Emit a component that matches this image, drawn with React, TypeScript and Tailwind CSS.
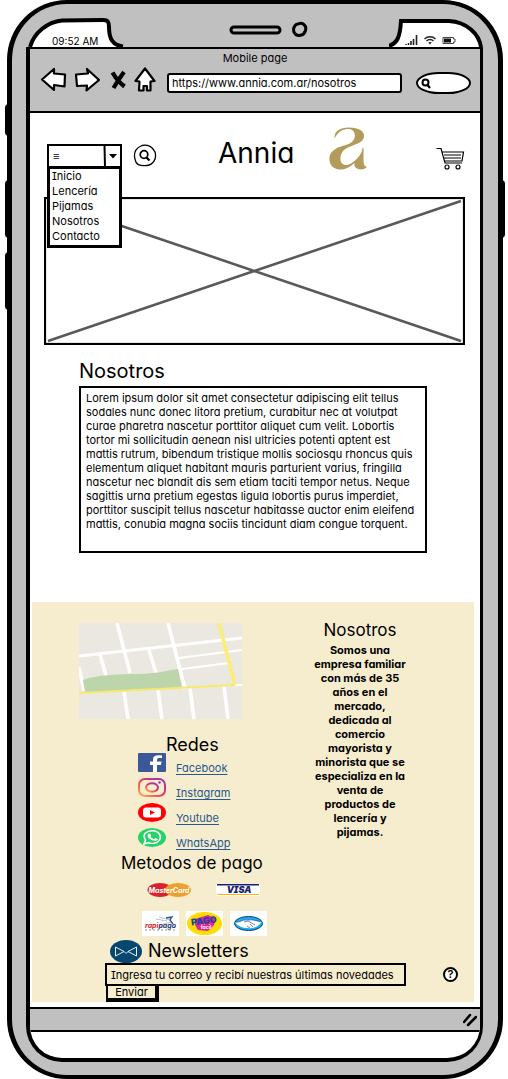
import React from "react";

const menu = ["Inicio", "Lencería", "Pijamas", "Nosotros", "Contacto"];

const about = [
  "Lorem ipsum dolor sit amet consectetur adipiscing elit tellus",
  "sodales nunc donec litora pretium, curabitur nec at volutpat",
  "curae pharetra nascetur porttitor aliquet cum velit. Lobortis",
  "tortor mi sollicitudin aenean nisl ultricies potenti aptent est",
  "mattis rutrum, bibendum tristique mollis sociosqu rhoncus quis",
  "elementum aliquet habitant mauris parturient varius, fringilla",
  "nascetur nec blandit dis sem etiam taciti tempor netus. Neque",
  "sagittis urna pretium egestas ligula lobortis purus imperdiet,",
  "porttitor suscipit tellus nascetur habitasse auctor enim eleifend",
  "mattis, conubia magna sociis tincidunt diam congue torquent.",
];

const company = [
  "Somos una",
  "empresa familiar",
  "con más de 35",
  "años en el",
  "mercado,",
  "dedicada al",
  "comercio",
  "mayorista y",
  "minorista que se",
  "especializa en la",
  "venta de",
  "productos de",
  "lencería y",
  "pijamas.",
];

function StatusBar() {
  return (
    <div className="flex h-[45px] items-stretch justify-between border-b-2 border-black">
      <div className="relative w-[98px]">
        <svg className="absolute inset-0" width="98" height="43" viewBox="0 0 98 43" aria-hidden="true">
          <path d="M4 43C7 31 19 17 36 16L78 15.500C83 15.500 84 18 84 23C84 34 87 41 98 43Z" fill="#fff" />
          <path d="M4 43C8 29 21 18 36 16.500L77 16C82 16 83 18 83 23C83 34 86 41 97 42.500" fill="none" stroke="#000" strokeWidth="4" />
        </svg>
        <span className="relative block pt-[30px] pl-[26px] text-[10px] leading-[14px]">09:52 AM</span>
      </div>
      <div className="flex items-start gap-[9px] pt-[17px] pl-6">
        <svg width="53" height="15" viewBox="0 0 53 15" aria-hidden="true">
          <rect x="2" y="6" width="49" height="6" rx="3" fill="#c0c0c0" stroke="#000" strokeWidth="3" />
        </svg>
        <svg width="17" height="17" viewBox="0 0 17 17" aria-hidden="true">
          <path d="M7 3C11 1 16 4 14.500 9.500C13 15 6 16 3.500 12C1 8 4 3 7 3Z" fill="#c0c0c0" stroke="#000" strokeWidth="3" />
        </svg>
      </div>
      <div className="relative w-[94px]">
        <svg className="absolute inset-0" width="94" height="43" viewBox="0 0 94 43" aria-hidden="true">
          <path d="M0 43C8 40 11 35 12 16.500H60C77 17 90 30 92 43Z" fill="#fff" />
          <path d="M0 42C8 39 11 34 12 17H60C78 18 90 30 92 43" fill="none" stroke="#000" strokeWidth="4" />
        </svg>
        <div className="relative flex items-end gap-[6px] pt-[30px] pl-4">
          <svg width="13" height="12" viewBox="0 0 13 12" aria-hidden="true">
            <path d="M1 11v-1M3.500 11V9M6 11V7M8.500 11V5M11.500 11V1" stroke="#222" strokeWidth="1.600" />
          </svg>
          <svg width="12" height="12" viewBox="0 0 12 12" fill="none" stroke="#222" strokeWidth="1.400" aria-hidden="true">
            <path d="M0.500 5C3.500 2 8.500 2 11.500 5M2.500 7C4.500 5 7.500 5 9.500 7" />
            <path d="M4.300 8.500C5.400 7.700 6.600 7.700 7.700 8.500L6 10.500Z" fill="#222" stroke="none" />
          </svg>
          <svg width="14" height="10" viewBox="0 0 14 10" aria-hidden="true">
            <path d="M1 1.500H11.500V3H13V6H11.500V7.500H1Z" fill="#fff" stroke="#444" />
            <rect x="2" y="2.500" width="7" height="4" fill="#111" />
          </svg>
        </div>
      </div>
    </div>
  );
}

function BrowserBar() {
  return (
    <header className="h-[64px] border-b-2 border-black bg-[#c0c0c0]">
      <p className="pt-[3px] text-center text-[11px] leading-[13px]">Mobile page</p>
      <div className="flex items-center pr-[9px] pl-[10px]">
        <div className="flex items-center gap-[7px]">
          <button type="button" aria-label="Atrás">
            <svg width="27" height="25" viewBox="0 0 27 25" aria-hidden="true">
              <path d="M2 12.500L14 2V6.500L25 7.500L24.500 19.500L14 18V23Z" fill="#fff" stroke="#000" strokeWidth="2.200" strokeLinejoin="round" />
            </svg>
          </button>
          <button type="button" aria-label="Adelante">
            <svg width="27" height="25" viewBox="0 0 27 25" aria-hidden="true">
              <path d="M25 13L13 2L14 6.500L2 7.500L3 19L13 18.500L12.500 23.500Z" fill="#fff" stroke="#000" strokeWidth="2.200" strokeLinejoin="round" />
            </svg>
          </button>
          <button type="button" aria-label="Detener" className="pl-[2px]">
            <svg width="17" height="20" viewBox="0 0 17 20" aria-hidden="true">
              <path d="M2.500 2.500C5 7 10 13 14.500 16.500M14 2C11 6 7 12 3.500 18" fill="none" stroke="#000" strokeWidth="4.200" />
            </svg>
          </button>
          <button type="button" aria-label="Página de inicio">
            <svg width="22" height="25" viewBox="0 0 22 25" aria-hidden="true">
              <path d="M11 1.500L20.500 14L16.500 14.500V23.500H13V19H9.500V23.500H5L5.500 14.500L1.500 14Z" fill="#fff" stroke="#000" strokeWidth="2.200" strokeLinejoin="round" />
            </svg>
          </button>
        </div>
        <input
          aria-label="Dirección"
          defaultValue="https://www.annia.com.ar/nosotros"
          className="mt-[7px] ml-[11px] h-5 min-w-0 flex-1 rounded-[3px] border-2 border-black bg-white px-[3px] text-[11px] leading-4"
        />
        <label className="mt-[7px] ml-[14px] flex h-[22px] w-[55px] shrink-0 items-center rounded-[50%/60%] border-2 border-black bg-white pl-[3px]">
          <svg className="shrink-0" width="10" height="11" viewBox="0 0 10 11" aria-hidden="true">
            <circle cx="4.500" cy="4.500" r="3" fill="none" stroke="#000" strokeWidth="2" />
            <path d="M6.500 7L9 10" stroke="#000" strokeWidth="2.200" />
          </svg>
          <input aria-label="Buscar en la web" className="w-full min-w-0 bg-transparent text-[11px] outline-none" />
        </label>
      </div>
    </header>
  );
}

function SiteHeader() {
  return (
    <div className="flex h-[84px] items-start pt-[14px] pr-[15px] pl-[17px]">
      <div className="relative mt-[17px] w-[75px] shrink-0">
        <select aria-label="Menú" className="block h-6 w-full appearance-none rounded-none border-2 border-black bg-white pl-1 text-[11px]">
          <option>≡</option>
        </select>
        <svg className="pointer-events-none absolute top-0 right-0" width="19" height="24" viewBox="0 0 19 24" aria-hidden="true">
          <path d="M1.500 1L2 23" stroke="#000" strokeWidth="2" />
          <path d="M6 10H14L10 14.500Z" fill="#000" />
        </svg>
        <nav className="absolute top-[22px] left-0 z-10 w-full border-[3px] border-black bg-white pb-px pl-[2px] text-[11px] leading-[15px]">
          {menu.map((item) => (
            <a key={item} href="#" className="block">
              {item}
            </a>
          ))}
        </nav>
      </div>
      <button type="button" aria-label="Buscar" className="mt-[17px] ml-[11px] shrink-0">
        <svg width="24" height="24" viewBox="0 0 24 24" fill="none" stroke="#000" aria-hidden="true">
          <path d="M9 1.500C15 0 20 3 22 8C24 15 20 21 14 21.500C6 22 3 21 2 15C0 8 4 3 9 1.500Z" strokeWidth="1.300" />
          <circle cx="11" cy="10.500" r="3.800" strokeWidth="1.700" />
          <path d="M13.500 13.500L16.500 16.500" strokeWidth="2.200" />
        </svg>
      </button>
      <h1 className="mt-[7px] ml-[61px] text-[28px] leading-[38px]">Annia</h1>
      <svg className="ml-auto shrink-0" width="38" height="44" viewBox="0 0 38 44" aria-label="Logo de Annia">
        <path
          d="M5.500 11.500C5 4 11 0.500 20 0.500C30 0.500 35.500 4 35 9.500C34.500 15 28 17 20 20C13 23 11 28 11.500 33C12 38 17 39 21 37C28 33 33 27 33.500 21H34.500V33C34.500 38 36 40 38 39.500C37 42 32 43 29 42C26 41 25 39 25.500 36C20 41 15 43 10 42.500C3 41.500 0 37 0.500 30C1.500 23 9 20 17 18C24 16 27 11 25.500 6C24 1.500 18 1 13 3.500C9 5.500 7.500 8 5.500 11.500Z"
          fill="#b39b5b"
        />
      </svg>
      <button type="button" aria-label="Carrito" className="mt-[20px] ml-[69px] shrink-0">
        <svg width="29" height="24" viewBox="0 0 29 24" fill="none" stroke="#000" strokeWidth="1.200" aria-hidden="true">
          <path d="M0.500 1.500H5L9 16H26M6 5H27.500L26 14H9M8 8H25M8 11H25" />
          <circle cx="11" cy="20" r="2" />
          <circle cx="22" cy="20" r="2" />
        </svg>
      </button>
    </div>
  );
}

function MapView() {
  return (
    <svg className="h-24 w-full" viewBox="0 0 163 96" preserveAspectRatio="none" role="img" aria-label="Mapa">
      <rect width="163" height="96" fill="#ebe8e1" />
      <g stroke="#fff" fill="none">
        <path d="M0 33L163 15" strokeWidth="2.800" />
        <path d="M100 35L163 27M103 46L150 40M155 62H163" strokeWidth="2.200" />
        <path d="M38 0L51 50M89 0L106 66M21 31L27 53M70 27L77 50M0 44L5 68M45 69L49 96M79 67L83 96M111 65L115 96M145 63L149 96" strokeWidth="3.600" />
      </g>
      <path d="M4 57C22 51 36 52 52 51C72 51 82 49 99 46L103 65L6 69Z" fill="#bcd5ab" />
      <path d="M0 70L156 62" stroke="#f8e96c" strokeWidth="2.200" />
      <path d="M140 0L156 62" stroke="#fcee75" strokeWidth="3.600" />
    </svg>
  );
}

function FacebookIcon() {
  return (
    <svg width="28" height="19" viewBox="0 0 28 19" aria-hidden="true">
      <rect width="28" height="19" rx="1" fill="#3b5998" />
      <path d="M15 19V12H12V8.500H15V6C15 3 18 1.500 24 2.500V5H21C19 5 19 6 19 8.500H23.500L23 12H19V19Z" fill="#fff" />
    </svg>
  );
}

function InstagramIcon() {
  return (
    <svg width="28" height="19" viewBox="0 0 28 19" fill="none" stroke="url(#insta)" aria-hidden="true">
      <defs>
        <linearGradient id="insta" x1="0" y1="1" x2="1" y2="0">
          <stop offset="0" stopColor="#fdb446" />
          <stop offset="0.500" stopColor="#e8365d" />
          <stop offset="1" stopColor="#8a3ac8" />
        </linearGradient>
      </defs>
      <rect x="1" y="1" width="26" height="17" rx="6" strokeWidth="2" />
      <ellipse cx="14" cy="9.500" rx="6" ry="4.200" strokeWidth="2" />
      <circle cx="21.500" cy="4.500" r="1.300" fill="#b038a0" stroke="none" />
    </svg>
  );
}

function YoutubeIcon() {
  return (
    <svg width="28" height="19" viewBox="0 0 28 19" aria-hidden="true">
      <ellipse cx="14" cy="9.500" rx="14" ry="9.500" fill="#f00" />
      <rect x="5" y="4.500" width="18" height="10" rx="3" fill="#fff" />
      <path d="M12 7L17 9.500L12 12Z" fill="#f00" />
    </svg>
  );
}

function WhatsAppIcon() {
  return (
    <svg width="28" height="19" viewBox="0 0 28 19" aria-hidden="true">
      <ellipse cx="14" cy="9.500" rx="14" ry="9.500" fill="#25d366" />
      <path d="M6 16L7.500 12C3.500 6 9 2.500 14.500 2.700C21 3 24 8 21.500 12C19 15.500 14 16 10 14.700Z" fill="none" stroke="#fff" strokeWidth="1.500" />
      <path d="M10.500 5.500L12.500 6L13 8C12.500 9 15 11 16 11L17.500 10L20 11.500C18 14.500 9 11.500 9.500 7Z" fill="#fff" />
    </svg>
  );
}

const networks = [
  { name: "Facebook", Icon: FacebookIcon },
  { name: "Instagram", Icon: InstagramIcon },
  { name: "Youtube", Icon: YoutubeIcon },
  { name: "WhatsApp", Icon: WhatsAppIcon },
];

function Payments() {
  return (
    <div className="pl-[63px]">
      <div className="flex items-center gap-6 pt-2 pl-[5px]">
        <svg width="45" height="16" viewBox="0 0 45 16" role="img" aria-label="MasterCard">
          <ellipse cx="13" cy="8" rx="12.500" ry="7" fill="#d9222a" />
          <ellipse cx="31" cy="8" rx="13" ry="7" fill="#ee9f2d" />
          <text x="22" y="11" textAnchor="middle" fontSize="7" fontWeight="700" fontStyle="italic" fill="#fff">MasterCard</text>
        </svg>
        <svg width="44" height="12" viewBox="0 0 44 12" role="img" aria-label="Visa">
          <rect width="44" height="12" fill="#fff" />
          <rect x="1" width="42" height="1.500" fill="#1a1f71" />
          <rect x="1" y="10" width="42" height="1" fill="#f7b600" />
          <text x="23" y="9" textAnchor="middle" fontSize="9" fontWeight="900" fontStyle="italic" fill="#1a1f71">VISA</text>
        </svg>
      </div>
      <div className="flex gap-[7px] pt-[13px]">
        <svg width="37" height="25" viewBox="0 0 37 25" role="img" aria-label="rapipago">
          <rect width="37" height="25" fill="#fff" />
          <path d="M14 8L25 10M17 6L28 9M21 13L30 11" stroke="#b9c3d0" />
          <path d="M24 7L30 6L28 9L31 13" fill="none" stroke="#2d5684" strokeWidth="1.300" />
          <text x="3" y="17" fontSize="7" fontWeight="700" fontStyle="italic" fill="#d9222a">rapi<tspan fill="#22306c">pago</tspan></text>
          <path d="M3 19H34" stroke="#999" strokeDasharray="2 2" />
        </svg>
        <svg width="37" height="25" viewBox="0 0 37 25" role="img" aria-label="Pago Fácil">
          <rect width="37" height="25" fill="#fff" />
          <ellipse cx="18.500" cy="12.500" rx="17.500" ry="11.500" fill="#fd0" />
          <path d="M9 8L22 4L30 8L28 14L22 20L12 19L9 14Z" fill="#e5239b" />
          <text x="18" y="13" textAnchor="middle" fontSize="9" fontWeight="900" fill="#17479e" transform="rotate(-7 18 12)">PAGO</text>
          <text x="20" y="18" textAnchor="middle" fontSize="5" fontWeight="700" fill="#fff">fácil</text>
        </svg>
        <svg width="37" height="25" viewBox="0 0 37 25" role="img" aria-label="Mercado Pago">
          <rect width="37" height="25" fill="#fff" />
          <ellipse cx="18.500" cy="12.500" rx="14" ry="7" fill="#19b0f0" stroke="#13377d" strokeWidth="1" />
          <path d="M5 11C10 12 12 8 18 9C24 8 28 11 32 10.500C29 15 24 18 18 17C12 17 8 15 5 11Z" fill="#fff" />
          <path d="M5 11C10 12 12 8 18 9C24 8 28 11 32 10.500M14 11L18 10L25 14M17 15L20 17M20 13L23 16" fill="none" stroke="#13377d" strokeWidth="0.600" />
        </svg>
      </div>
    </div>
  );
}

function Newsletter() {
  return (
    <form onSubmit={(e) => e.preventDefault()}>
      <div className="flex items-center gap-[6px] pt-[3px] pl-[31px]">
        <svg width="32" height="23" viewBox="0 0 32 23" aria-hidden="true">
          <ellipse cx="16" cy="11.500" rx="16" ry="11.500" fill="#07476f" />
          <path d="M5.500 7V16L14 11.500ZM26.500 7V16L18 11.500ZM14 11.500C15 13.500 17 13.500 18 11.500" fill="none" stroke="#e8eef2" />
        </svg>
        <label htmlFor="email" className="text-[18px] leading-[24px]">Newsletters</label>
      </div>
      <div className="flex items-center justify-between pr-4 pl-[26px]">
        <input
          id="email"
          type="email"
          placeholder="Ingresa tu correo y recibí nuestras últimas novedades"
          className="h-[23px] w-[301px] min-w-0 border-2 border-black bg-transparent px-1 text-[11px] placeholder:text-black"
        />
        <button type="button" aria-label="Ayuda" className="flex h-[15px] w-[15px] shrink-0 items-center justify-center rounded-full border-2 border-black bg-white text-[11px] leading-none font-semibold">
          ?
        </button>
      </div>
      <button type="submit" className="-mt-[2px] ml-[27px] block h-[18px] w-[53px] border-t-2 border-r-4 border-b-4 border-l-2 border-black bg-[#f6edce] text-[11px] leading-[12px]">
        Enviar
      </button>
    </form>
  );
}

function Footer() {
  return (
    <footer className="mr-[6px] ml-[2px] bg-[#f6edce] pt-[21px]">
      <div className="flex justify-between pr-[60px] pl-[47px]">
        <div className="w-[163px] shrink-0">
          <MapView />
          <h2 className="pt-[18px] pl-[87px] text-[18px] leading-[16px]">Redes</h2>
          <ul className="flex flex-col gap-[6px] pl-[59px]">
            {networks.map(({ name, Icon }) => (
              <li key={name} className="flex h-[19px] items-start gap-[10px]">
                <Icon />
                <a href="#" className="pt-2 text-[11px] leading-[14px] text-[#27588f] underline underline-offset-2">
                  {name}
                </a>
              </li>
            ))}
          </ul>
        </div>
        <section className="w-[108px] text-center">
          <h2 className="text-[17px] leading-[14px]">Nosotros</h2>
          <p className="pt-[6px] text-[11px] leading-[14px] font-bold">
            {company.map((line) => (
              <span key={line} className="block whitespace-nowrap">{line}</span>
            ))}
          </p>
        </section>
      </div>
      <h2 className="pt-[5px] pl-[89px] text-[17px] leading-[22px]">Metodos de pago</h2>
      <div className="pl-[47px]">
        <Payments />
      </div>
      <div className="pl-[47px]">
        <Newsletter />
      </div>
    </footer>
  );
}

export default function App() {
  return (
    <div className="relative min-h-screen bg-white pr-[5px] pl-[7px] font-['Inter','Liberation_Sans',sans-serif] text-black [font-feature-settings:'cv11','cv08']">
      <span className="absolute top-[104px] left-[5px] h-8 w-1 rounded-l bg-black" />
      <span className="absolute top-[180px] left-[5px] h-[58px] w-1 rounded-l bg-black" />
      <span className="absolute top-[252px] left-[5px] h-[58px] w-1 rounded-l bg-black" />
      <span className="absolute top-[180px] right-[3px] h-[58px] w-1 rounded-r bg-black" />
      <div className="rounded-[60px] border-x-[5px] border-t-4 border-b-4 border-black bg-[#c0c0c0] pr-[15px] pb-[13px] pl-[14px]">
        <StatusBar />
        <div className="overflow-hidden rounded-b-[36px] border-r-[3px] border-b-4 border-l-4 border-black bg-white">
          <BrowserBar />
          <main>
            <SiteHeader />
            <svg className="block h-[148px] w-full pr-[15px] pl-[14px]" viewBox="0 0 421 148" preserveAspectRatio="none" role="img" aria-label="Imagen">
              <rect x="1" y="1" width="419" height="146" fill="#fff" stroke="#000" strokeWidth="2.200" />
              <path d="M4 4L417 144M4 144L417 4" stroke="#595959" strokeWidth="2.600" />
            </svg>
            <section className="pr-[53px] pl-[49px]">
              <h2 className="pt-3 text-[20px] leading-[28px]">Nosotros</h2>
              <div className="mt-px h-[167px] border-2 border-black pt-[3px] pl-[5px] text-[11px] leading-[14px]">
                {about.map((line) => (
                  <span key={line} className="block whitespace-nowrap">{line}</span>
                ))}
              </div>
            </section>
            <div className="h-[49px]" />
            <Footer />
          </main>
          <div className="mt-[5px] flex h-[25px] items-center justify-end border-y-2 border-black bg-[#c0c0c0] pr-[3px]">
            <svg width="14" height="14" viewBox="0 0 14 14" aria-hidden="true">
              <path d="M1 9L7 2M5 12L13 4" stroke="#000" strokeWidth="2.500" strokeLinecap="round" />
            </svg>
          </div>
          <div className="h-[26px]" />
        </div>
      </div>
    </div>
  );
}
